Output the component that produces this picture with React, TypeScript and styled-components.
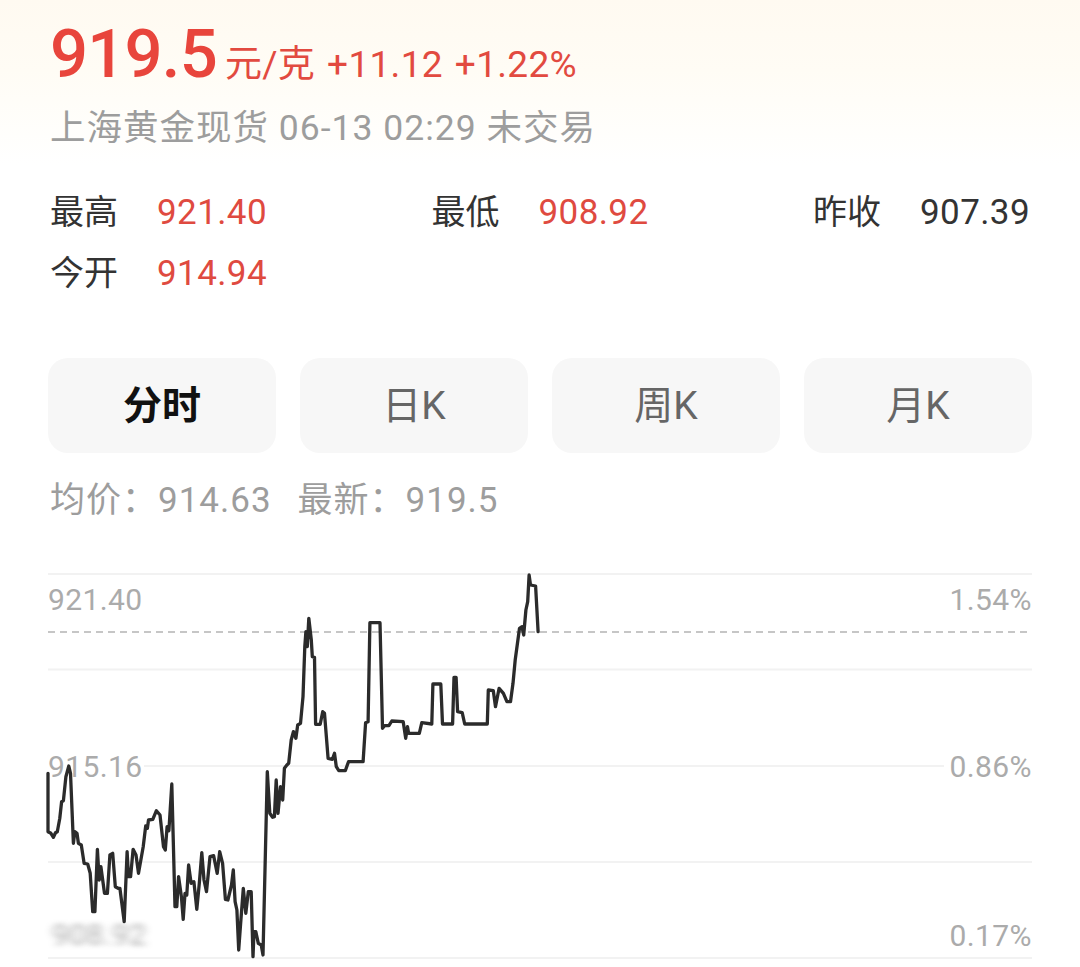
import React from "react";
import styled, { createGlobalStyle } from "styled-components";

const GlobalStyle = createGlobalStyle`
  html, body {
    margin: 0;
    padding: 0;
    background: #ffffff;
  }
  body {
    font-family: Roboto, "Noto Sans CJK SC", "Noto Sans", sans-serif;
    -webkit-font-smoothing: antialiased;
  }
  * { box-sizing: border-box; }
`;

const Page = styled.div`
  width: 1080px;
  min-height: 967px;
  padding: 0 48px;
  background: linear-gradient(to bottom, #fffaf1 0px, #fffcf5 70px, #ffffff 165px);
  overflow: hidden;
`;

const PriceRow = styled.div`
  display: flex;
  align-items: baseline;
  padding-top: 21px;
  padding-left: 2px;
  color: #e8453c;
`;

const BigPrice = styled.span`
  font-size: 67px;
  line-height: 66px;
  font-weight: 500;
  letter-spacing: -0.8px;
`;

const PriceMeta = styled.span<{ $gap?: number }>`
  font-size: 37px;
  line-height: 40px;
  letter-spacing: 0.3px;
  margin-left: ${(p) => p.$gap ?? 12}px;
  color: #e24a40;
`;

const SubTitle = styled.div`
  margin-top: 21px;
  padding-left: 2px;
  font-size: 35.5px;
  line-height: 40px;
  letter-spacing: 1px;
  color: #9d9d9d;
`;

const StatsRow = styled.div<{ $spread?: boolean }>`
  display: flex;
  justify-content: ${(p) => (p.$spread ? "space-between" : "flex-start")};
  padding: 0 2px;
  margin-top: ${(p) => (p.$spread ? 44 : 20)}px;
`;

const Stat = styled.div`
  display: flex;
  align-items: baseline;
  gap: 39px;
  font-size: 34px;
  line-height: 40px;
`;

const StatLabel = styled.span`
  color: #333333;
`;

const StatValue = styled.span<{ $up?: boolean }>`
  font-size: 35px;
  letter-spacing: 0.4px;
  color: ${(p) => (p.$up ? "#df4a40" : "#333333")};
`;

const Tabs = styled.div`
  display: grid;
  grid-template-columns: repeat(4, 1fr);
  gap: 24px;
  margin-top: 64px;
`;

const Tab = styled.div<{ $active?: boolean }>`
  height: 95px;
  padding-bottom: 7px;
  border-radius: 20px;
  background: #f7f7f7;
  display: flex;
  align-items: center;
  justify-content: center;
  font-size: 39px;
  font-weight: ${(p) => (p.$active ? 700 : 400)};
  color: ${(p) => (p.$active ? "#111111" : "#666666")};
`;

const AvgRow = styled.div`
  margin-top: 28px;
  padding-left: 2px;
  font-size: 35px;
  line-height: 40px;
  letter-spacing: 1px;
  color: #9d9d9d;
  display: flex;
  gap: 26px;
`;

const ChartSvg = styled.svg`
  display: block;
  margin-top: 52px;
  width: 984px;
  height: 386px;
  overflow: visible;
`;

const AxisText = styled.text`
  font-family: Roboto, "Noto Sans", sans-serif;
  font-size: 30px;
  letter-spacing: 0.4px;
  fill: #ababab;
`;

/* traced intraday series (reference trace space) */
const TRACE: [number, number][] = [
  [137, 640], [137, 815], [145, 820], [152, 832], [158, 818], [163, 815], [170, 775],
  [175, 725], [180, 722], [187, 650], [195, 618], [200, 640], [208, 850], [212, 815],
  [218, 820], [222, 850], [230, 855], [238, 910], [248, 912], [255, 940], [262, 1055],
  [268, 1055], [275, 868], [280, 960], [285, 920], [295, 1000], [303, 1000], [310, 885],
  [318, 880], [325, 980], [333, 985], [338, 985], [350, 1085], [358, 875], [362, 950],
  [368, 950], [375, 868], [383, 885], [390, 940], [403, 860], [410, 798], [415, 805],
  [418, 780], [430, 778], [440, 752], [450, 765], [460, 860], [465, 870], [470, 800],
  [475, 812], [483, 672], [492, 1040], [497, 1040], [502, 950], [510, 1010], [515, 1078],
  [520, 1000], [525, 1005], [530, 915], [537, 970], [545, 965], [553, 1048], [560, 970],
  [567, 878], [573, 960], [580, 995], [590, 890], [600, 887], [610, 940], [617, 875],
  [625, 910], [633, 1018], [640, 1020], [650, 975], [655, 930], [660, 1025], [665, 1050],
  [670, 1170], [675, 1100], [683, 985], [690, 1060], [697, 995], [705, 995], [710, 1190],
  [713, 1115], [718, 1115], [725, 1150], [733, 1155], [738, 1185], [750, 635], [757, 760],
  [765, 772], [770, 770], [775, 660], [780, 760], [787, 680], [793, 720], [798, 625],
  [805, 615], [810, 610], [817, 540], [823, 515], [830, 535], [835, 495], [843, 490],
  [850, 410], [855, 260], [858, 215], [862, 260], [866, 175], [873, 240], [876, 290],
  [882, 292], [885, 493], [898, 493], [905, 455], [910, 460], [920, 595], [932, 598],
  [938, 580], [943, 620], [950, 632], [968, 632], [977, 605], [1018, 605], [1025, 488],
  [1032, 485], [1037, 188], [1065, 188], [1072, 505], [1078, 497], [1090, 497],
  [1098, 483], [1130, 485], [1137, 535], [1142, 500], [1145, 520], [1175, 520],
  [1182, 488], [1210, 492], [1213, 372], [1235, 372], [1240, 492], [1268, 492],
  [1272, 352], [1278, 352], [1282, 455], [1295, 458], [1302, 492], [1365, 492],
  [1368, 390], [1382, 392], [1388, 440], [1398, 385], [1410, 400], [1420, 425],
  [1430, 425], [1437, 370], [1443, 300], [1455, 205], [1462, 200], [1467, 225],
  [1473, 150], [1478, 125], [1482, 45], [1486, 75], [1500, 78], [1507, 215],
];

const linePoints = TRACE.map(
  ([tx, ty]) => `${(tx * 0.3577 - 49).toFixed(1)},${(ty / 3 - 13).toFixed(1)}`
).join(" ");

const GRID = "#f2f2f2";

function IntradayChart() {
  return (
    <ChartSvg viewBox="0 0 984 386">
      <defs>
        <filter id="smear" x="-10%" y="-40%" width="120%" height="180%">
          <feGaussianBlur stdDeviation="4 2.5" />
        </filter>
      </defs>
      <line x1="0" x2="984" y1="1" y2="1" stroke={GRID} strokeWidth="2" />
      <line x1="0" x2="984" y1="96.5" y2="96.5" stroke={GRID} strokeWidth="2" />
      <line x1="96" x2="896" y1="193" y2="193" stroke={GRID} strokeWidth="2" />
      <line x1="0" x2="984" y1="289" y2="289" stroke={GRID} strokeWidth="2" />
      <line x1="0" x2="984" y1="385" y2="385" stroke={GRID} strokeWidth="2" />

      <AxisText x="0" y="37">921.40</AxisText>
      <AxisText x="984" y="37" textAnchor="end">1.54%</AxisText>
      <AxisText x="0" y="204">915.16</AxisText>
      <AxisText x="984" y="204" textAnchor="end">0.86%</AxisText>
      <AxisText x="984" y="373" textAnchor="end">0.17%</AxisText>
      <AxisText x="4" y="372" filter="url(#smear)" opacity="0.7" style={{ fill: "#8a8a8a" }}>
        908.92
      </AxisText>

      <line
        x1="0"
        x2="984"
        y1="59"
        y2="59"
        stroke="#b4b4b4"
        strokeWidth="1.5"
        strokeDasharray="7 5"
      />

      <polyline
        points={linePoints}
        fill="none"
        stroke="#2b2b2b"
        strokeWidth="3.3"
        strokeLinejoin="round"
        strokeLinecap="round"
      />
    </ChartSvg>
  );
}

export default function App() {
  return (
    <Page>
      <GlobalStyle />
      <PriceRow>
        <BigPrice>919.5</BigPrice>
        <PriceMeta $gap={8}>元/克</PriceMeta>
        <PriceMeta>+11.12</PriceMeta>
        <PriceMeta>+1.22%</PriceMeta>
      </PriceRow>
      <SubTitle>上海黄金现货 06-13 02:29 未交易</SubTitle>

      <StatsRow $spread>
        <Stat>
          <StatLabel>最高</StatLabel>
          <StatValue $up>921.40</StatValue>
        </Stat>
        <Stat>
          <StatLabel>最低</StatLabel>
          <StatValue $up>908.92</StatValue>
        </Stat>
        <Stat>
          <StatLabel>昨收</StatLabel>
          <StatValue>907.39</StatValue>
        </Stat>
      </StatsRow>
      <StatsRow>
        <Stat>
          <StatLabel>今开</StatLabel>
          <StatValue $up>914.94</StatValue>
        </Stat>
      </StatsRow>

      <Tabs>
        <Tab $active>分时</Tab>
        <Tab>日K</Tab>
        <Tab>周K</Tab>
        <Tab>月K</Tab>
      </Tabs>

      <AvgRow>
        <span>均价：914.63</span>
        <span>最新：919.5</span>
      </AvgRow>

      <IntradayChart />
    </Page>
  );
}
